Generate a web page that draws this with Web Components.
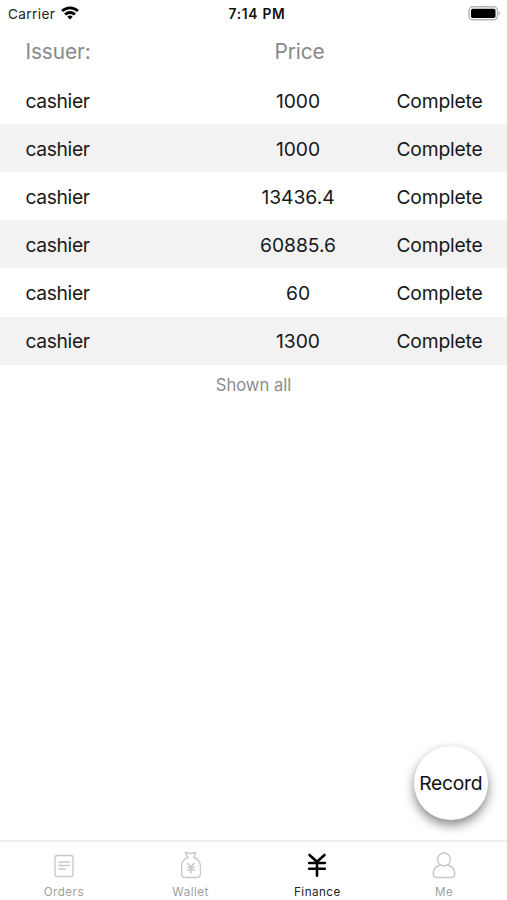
<!DOCTYPE html>
<html lang="en">
<head>
<meta charset="utf-8">
<title>Finance</title>
<style>
html,body{margin:0;height:100%;background:#fff}
</style>
</head>
<body>
<finance-app></finance-app>
<script>
const define = (name, html, setup) => customElements.define(name, class extends HTMLElement {
  constructor() {
    super();
    const t = document.createElement('template');
    t.innerHTML = html;
    this.attachShadow({mode: 'open'}).append(t.content.cloneNode(true));
  }
  connectedCallback() { if (setup) setup(this, this.shadowRoot); }
});

define('status-bar', `
<style>
:host{display:grid;grid-template-columns:1fr auto 1fr;align-items:center;height:28px;padding:0 7px 0 8px;box-sizing:border-box;font-size:13.6px;color:#222}
.left{display:flex;align-items:center;gap:6px;letter-spacing:.4px}
.time{font-weight:600;font-size:13.8px;letter-spacing:.7px;color:#111;transform:translateX(3px)}
.battery{justify-self:end;transform:translateY(-1px)}
svg{display:block}
.wifi{transform:translateY(-1px)}
</style>
<div class="left"><span>Carrier</span>
<svg class="wifi" width="18" height="14" viewBox="0 0 18 14" fill="none" stroke="#000" stroke-width="2.8"><path d="M1.1 5.1C5.6 .7 12.4.7 16.9 5.1"/><path d="M4.1 8.5C6.9 5.8 11.1 5.8 13.9 8.5"/><path d="M6.3 10.7Q9 8.4 11.7 10.7L9 13.4Z" fill="#000" stroke="none"/></svg></div>
<span class="time">7:14 PM</span>
<svg class="battery" width="32" height="15" viewBox="0 0 32 15"><rect x="1" y=".8" width="28.5" height="13" rx="3.8" fill="#fff" stroke="#b4b4b4" stroke-width="1.4"/><rect x="3" y="2.7" width="24.5" height="9.3" rx="1.8" fill="#000"/><path d="M30.7 5.2Q31.9 5.8 31.9 7.2T30.7 9.2Z" fill="#aaa"/></svg>`);

define('table-row', `
<style>
:host{display:grid;grid-template-columns:222px 152px 133px;align-items:center;height:48.1px;box-sizing:border-box;padding-top:1px;font-size:19.3px;color:#181818;line-height:24px}
:host([striped]){background:#f2f2f2}
:host([head]){font-size:20.8px;color:#888;padding-top:0}
.name{padding-left:25.5px;letter-spacing:-.38px}.price,.state{text-align:center}
.price{letter-spacing:-.05px}.state{letter-spacing:-.2px;padding-right:2px}
:host([head]) .name,:host([head]) .price{letter-spacing:-.1px}
:host([head]) .price{padding-left:3px}
</style>
<div class="name"><slot name="name"></slot></div><div class="price"><slot name="price"></slot></div><div class="state"><slot name="state"></slot></div>`);

define('record-button', `
<style>
:host{position:absolute;right:19.5px;bottom:80.5px;width:73.5px;height:73.5px;border-radius:50%;background:#fff;box-shadow:0 5px 11px rgba(0,0,0,.48);display:flex;align-items:center;justify-content:center;font-size:19.3px;letter-spacing:-.25px;color:#111;white-space:nowrap}
</style><slot></slot>`);

define('tab-item', `
<style>
:host{display:flex;flex-direction:column;align-items:center;flex:1;color:#a0a0a0;font-size:11.6px;line-height:14px;letter-spacing:.5px;padding:7px 0 0 1px;--icon:#c8c8c8}
:host([active]){color:#222;--icon:#000}
.label{margin-top:2px}
</style>
<slot name="icon"></slot><span class="label"><slot></slot></span>`);

const icons = {
  orders: '<rect x="7" y="6.500" width="18" height="21" rx="2.200"/><path d="M10.800 13h10.700M10.800 16.500h10.700M10.800 20h6.500"/>',
  wallet: '<path d="M13 8.500 10.200 3.300 16 4.700 20.700 3.500 18.800 8.500M13 8.500C8.500 10 6.600 13.500 6.600 17.500v7q0 4 4 4h10.800q4 0 4-4v-7c0-4-2-7.500-6.600-9"/><path stroke-width="1.600" d="M13 14.500l3 3.500 3-3.500M12.800 18.500h6.400M12.800 21h6.400M16 18v6"/>',
  finance: '<g stroke-width="2.600" stroke-linecap="round"><path d="M8.500 6l7.500 6.800L23.500 6M8.200 14h15.600M8.200 19.800h15.600M16 12.800v14"/></g>',
  me: '<circle cx="16" cy="10.500" r="6.500"/><path d="M12 16C8 17.500 5.200 21 5.200 25q0 3.500 3.800 3.500h14q3.800 0 3.800-3.500c0-4-2.800-7.500-6.800-9"/>'
};
define('line-icon', `
<style>:host{display:block;width:32px;height:34px}svg{display:block;fill:none;stroke:var(--icon);stroke-width:1.35;stroke-linejoin:round;stroke-linecap:round}</style>
<svg width="32" height="34" viewBox="0 0 32 34"></svg>`,
(el, root) => { root.querySelector('svg').innerHTML = icons[el.getAttribute('name')]; });

define('tab-bar', `
<style>:host{display:flex;height:60px;box-sizing:border-box;border-top:2px solid #ededed;background:#fff}</style><slot></slot>`);

const rows = ['1000', '1000', '13436.4', '60885.6', '60', '1300'].map((p, i) =>
  `<table-row${i % 2 ? ' striped' : ''}><span slot="name">cashier</span><span slot="price">${p}</span><span slot="state">Complete</span></table-row>`).join('');
const tabs = ['Orders', 'Wallet', 'Finance', 'Me'].map(t =>
  `<tab-item${t === 'Finance' ? ' active' : ''}><line-icon slot="icon" name="${t.toLowerCase()}"></line-icon>${t}</tab-item>`).join('');

define('finance-app', `
<style>
:host{display:flex;flex-direction:column;position:relative;width:507px;height:900px;overflow:hidden;background:#fff;font-family:Inter,"Liberation Sans",sans-serif}
main{flex:1}
.end{text-align:center;font-size:16.6px;line-height:24px;color:#8c8c8c;padding-top:8px}
</style>
<status-bar></status-bar>
<main><table-row head><span slot="name">Issuer:</span><span slot="price">Price</span></table-row>${rows}<div class="end">Shown all</div></main>
<tab-bar>${tabs}</tab-bar>
<record-button>Record</record-button>`);
</script>
</body>
</html>
